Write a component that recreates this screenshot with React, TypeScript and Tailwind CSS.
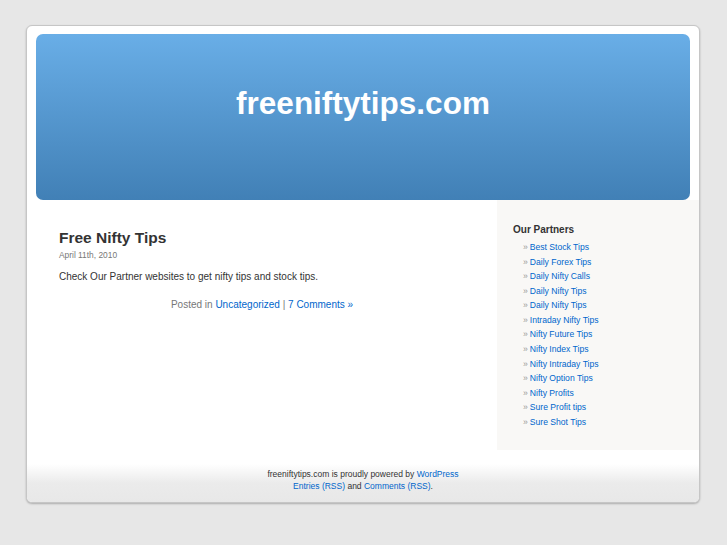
const partners = [
  "Best Stock Tips",
  "Daily Forex Tips",
  "Daily Nifty Calls",
  "Daily Nifty Tips",
  "Daily Nifty Tips",
  "Intraday Nifty Tips",
  "Nifty Future Tips",
  "Nifty Index Tips",
  "Nifty Intraday Tips",
  "Nifty Option Tips",
  "Nifty Profits",
  "Sure Profit tips",
  "Sure Shot Tips",
];

export default function App() {
  return (
    <div className="min-h-[545px] bg-[#e7e7e7] pt-[25px] font-['Liberation_Sans',Arial,sans-serif]">
      <div className="ml-[26px] w-[674px] rounded-[6px] border border-[#c6c6c6] bg-white shadow-[0_1px_2px_rgba(0,0,0,0.25)] overflow-hidden">
        {/* header */}
        <div className="mx-[9px] mt-[8px] h-[166px] rounded-[7px] bg-gradient-to-b from-[#69aee7] to-[#4180b6] pt-[51px] text-center">
          <h1 className="text-[31.5px] font-bold leading-[36px] text-white">freeniftytips.com</h1>
        </div>

        <div className="flex h-[250px]">
          {/* content */}
          <div className="flex-1 pl-[32px] pt-[28px] text-[#333]">
            <h2 className="text-[15.5px] font-bold leading-[20px] text-[#333]">Free Nifty Tips</h2>
            <div className="mt-[1px] text-[8.4px] leading-[12px] text-[#777]">April 11th, 2010</div>
            <p className="mt-[9px] text-[10px] leading-[14px]">
              Check Our Partner websites to get nifty tips and stock tips.
            </p>
            <p className="mt-[14px] -ml-[32px] text-center text-[10px] leading-[14px] text-[#777]">
              Posted in <a className="text-[#0066cc]">Uncategorized</a> |{" "}
              <a className="text-[#0066cc]">7 Comments &raquo;</a>
            </p>
          </div>

          {/* sidebar */}
          <div className="w-[202px] bg-[#f9f8f6] pl-[16px] pt-[23px]">
            <h3 className="text-[10px] font-bold leading-[14px] text-[#333]">Our Partners</h3>
            <ul className="mt-[3px]">
              {partners.map((p, i) => (
                <li key={i} className="flex h-[14.58px] items-center pl-[10px] text-[8.6px] leading-[14.58px]">
                  <span className="mr-[2px] text-[#999]">&raquo;</span>
                  <a className="text-[#0066cc]">{p}</a>
                </li>
              ))}
            </ul>
          </div>
        </div>

        {/* footer */}
        <div className="h-[52px] bg-[linear-gradient(to_bottom,#ffffff_0px,#ffffff_14px,#ebebeb_33px,#e8e8e8_100%)] pt-[18px] text-center text-[8.5px] leading-[12px] text-[#333]">
          <p>
            freeniftytips.com is proudly powered by <a className="text-[#0066cc]">WordPress</a>
          </p>
          <p>
            <a className="text-[#0066cc]">Entries (RSS)</a> and <a className="text-[#0066cc]">Comments (RSS)</a>.
          </p>
        </div>
      </div>
    </div>
  );
}
